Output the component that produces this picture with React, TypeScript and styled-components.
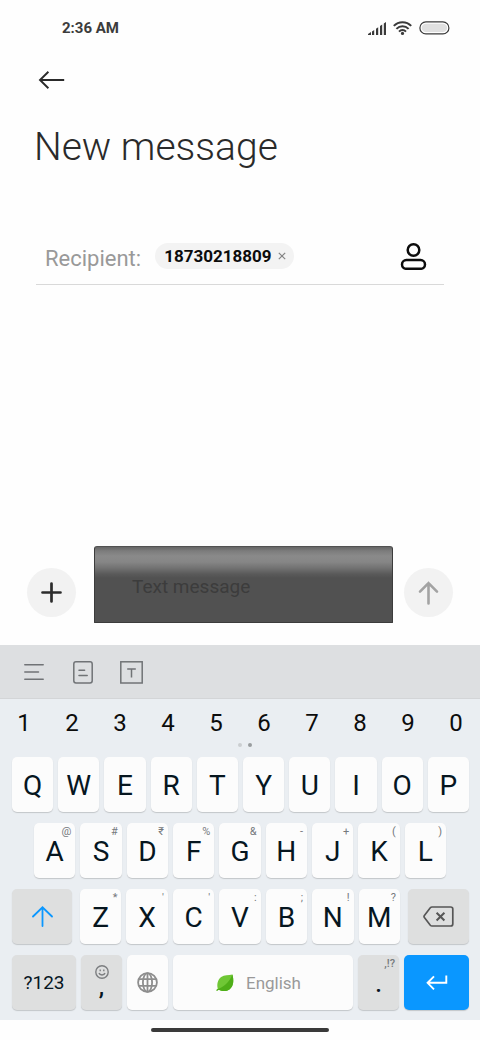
import React, { useState } from "react";
import styled, { createGlobalStyle } from "styled-components";

const GlobalStyle = createGlobalStyle`
  *, *::before, *::after { box-sizing: border-box; }
  body { margin: 0; background: #fefefe; font-family: Roboto, "Liberation Sans", sans-serif; }
  button, input { font-family: inherit; }
  button { padding: 0; border: 0; background: none; cursor: pointer; }
  svg { display: block; }
`;

const Screen = styled.div`
  display: flex;
  flex-direction: column;
  min-height: 100vh;
  background: #fefefe;
`;

const StatusBar = styled.div`
  display: flex;
  align-items: center;
  justify-content: space-between;
  height: 56px;
  padding: 0 30px 0 62px;
  color: #3c3c3c;
  font-size: 15px;
  font-weight: 700;
`;

const StatusIcons = styled.div`
  display: flex;
  align-items: center;
  gap: 7px;
`;

const Header = styled.header`
  padding: 8px 34px 0;
`;

const BackButton = styled.button`
  display: flex;
  align-items: center;
  height: 32px;
  padding: 0 4px;
`;

const Title = styled.h1`
  margin: 28px 0 0;
  color: #2a2a2a;
  font-size: 39px;
  font-weight: 300;
  line-height: 46px;
`;

const RecipientRow = styled.div`
  display: flex;
  align-items: center;
  height: 58px;
  margin: 57px 36px 0;
  padding: 0 17px 0 9px;
  border-bottom: 1px solid #d9d9d9;
`;

const RecipientLabel = styled.label`
  color: #999;
  font-size: 22px;
  line-height: 26px;
  padding-top: 6px;
`;

const Chip = styled.span`
  display: flex;
  align-items: center;
  gap: 7px;
  height: 26px;
  margin-left: 14px;
  padding: 0 8px 0 9px;
  border-radius: 13px;
  background: #f3f3f3;
  color: #0c0c0c;
  font-size: 17px;
  font-weight: 700;
`;

const RecipientInput = styled.input`
  flex: 1;
  min-width: 0;
  border: 0;
  outline: 0;
  background: transparent;
  font-size: 17px;
`;

const Conversation = styled.main`
  flex: 1;
`;

const Composer = styled.form`
  display: flex;
  align-items: flex-end;
  padding: 0 27px 22px;
`;

const RoundButton = styled.button`
  display: grid;
  place-items: center;
  flex: none;
  width: 49px;
  height: 49px;
  margin-bottom: 6px;
  border-radius: 50%;
  background: #f2f2f2;
`;

const MessageInput = styled.input`
  flex: 1;
  min-width: 0;
  height: 77px;
  margin: 0 11px 0 18px;
  padding: 4px 37px 0;
  border: 1px solid #3c3c3c;
  border-top-color: #525252;
  border-radius: 3px 3px 1px 1px;
  outline: 0;
  background: linear-gradient(#666 0, #7c7c7c 4px, #8a8a8a 9px, #868686 15px, #727272 21px, #5a5a5a 27px, #515151 31px);
  color: #3a3a3a;
  font-size: 19px;
  &::placeholder { color: #3c3c3c; opacity: 1; }
`;

const Keyboard = styled.section`
  background: #eaeef2;
  padding-bottom: 10px;
`;

const Toolbar = styled.div`
  display: flex;
  align-items: center;
  gap: 24px;
  height: 54px;
  padding: 1px 21px 0;
  border-bottom: 1px solid #d3d5d7;
  background: #dddfe1;
`;

const ToolButton = styled.button`
  display: grid;
  place-items: center;
  width: 25px;
  height: 25px;
`;

const DigitRow = styled.div`
  display: grid;
  grid-template-columns: repeat(10, 1fr);
  padding-top: 3px;
`;

const Digit = styled.button`
  height: 41px;
  color: #0c0c0c;
  font-size: 24px;
`;

const PageDots = styled.div`
  display: flex;
  justify-content: center;
  gap: 6px;
  height: 14px;
  padding-left: 10px;
`;

const Dot = styled.span<{ $active?: boolean }>`
  width: 4px;
  height: 4px;
  border-radius: 50%;
  background: ${(p) => (p.$active ? "#999c9f" : "#cbced1")};
`;

const KeyRows = styled.div`
  display: flex;
  flex-direction: column;
  gap: 11px;
`;

const KeyRow = styled.div<{ $columns: string; $padding?: string; $gap?: number }>`
  display: grid;
  grid-template-columns: ${(p) => p.$columns};
  gap: ${(p) => p.$gap ?? 5}px;
  padding: ${(p) => p.$padding ?? "0 11px 0 12px"};
`;

const keyColors = { light: "#fcfcfc", dark: "#dedfdf", accent: "#0a97ff" };

const Key = styled.button<{ $tone?: keyof typeof keyColors; $size?: number }>`
  position: relative;
  display: flex;
  align-items: center;
  justify-content: center;
  height: 55px;
  min-width: 0;
  border-radius: 5px;
  background: ${(p) => keyColors[p.$tone ?? "light"]};
  box-shadow: 0 1px 1px #c3c6c9;
  color: #06161f;
  font-size: ${(p) => p.$size ?? 28}px;
  line-height: 24px;
`;

const LetterKey = styled(Key)`
  padding-top: 2px;
`;

const Hint = styled.span`
  position: absolute;
  top: 3px;
  right: 4px;
  color: #75797c;
  font-size: 11px;
  line-height: 12px;
`;

const SpaceKey = styled(Key)`
  gap: 12px;
  padding-right: 9px;
  color: #999;
`;

const CommaKey = styled(Key)`
  flex-direction: column;
  justify-content: flex-start;
  padding-top: 10px;
  font-weight: 500;
  line-height: 16px;
`;

const PeriodKey = styled(Key)`
  padding-top: 2px;
  font-weight: 500;
`;

const HomeArea = styled.footer`
  display: flex;
  justify-content: center;
  height: 20px;
  padding-top: 8px;
`;

const HomeHandle = styled.span`
  width: 37%;
  height: 4px;
  border-radius: 2px;
  background: #3a3a3a;
`;

const SignalIcon = () => (
  <svg width="18" height="13" viewBox="0 0 18 13" fill="#3a3a3a">
    <path d="M0 13V12L3 10V13zM4 9.4L6.2 8V13H4zM8 6.8L10.2 5.2V13H8zM12 4L14.2 2.4V13H12zM15.8 1.4L18 0V13H15.8z" />
  </svg>
);

const WifiIcon = () => (
  <svg width="19" height="14" viewBox="0 0 19 14" fill="none" stroke="#3a3a3a" strokeWidth="2">
    <path d="M.8 4.9C5.6 0 13.4 0 18.2 4.9M3.4 7.9C6.9 4.4 12.1 4.4 15.6 7.9M6 10.6C8 8.6 11 8.6 13 10.6" />
    <circle cx="9.5" cy="12.4" r="1.6" fill="#3a3a3a" stroke="none" />
  </svg>
);

const BatteryIcon = () => (
  <svg width="31" height="14" viewBox="0 0 31 14">
    <rect x=".9" y=".9" width="29" height="12" rx="6" fill="#fefefe" stroke="#3a3a3a" strokeWidth="1.2" />
    <rect x="2.7" y="2.7" width="25.4" height="8.4" rx="4.2" fill="#e0e0e0" />
  </svg>
);

const BackIcon = () => (
  <svg width="27" height="18" viewBox="0 0 27 18" fill="none" stroke="#2a2a2a" strokeWidth="1.9">
    <path d="M26.2 9H2M10.4 .8L2 9L10.4 17.2" />
  </svg>
);

const RemoveIcon = () => (
  <svg width="8" height="8" viewBox="0 0 8 8" stroke="#858585" strokeWidth="1.2">
    <path d="M.8 .8L7.2 7.2M7.2 .8L.8 7.2" />
  </svg>
);

const ContactIcon = () => (
  <svg width="27" height="28" viewBox="0 0 27 28" fill="none" stroke="#0c0c0c" strokeWidth="2.5">
    <circle cx="13.5" cy="8" r="5.8" />
    <rect x="2" y="18" width="23" height="8.8" rx="4.4" />
  </svg>
);

const PlusIcon = () => (
  <svg width="21" height="21" viewBox="0 0 21 21" stroke="#2c2c2c" strokeWidth="2.7" strokeLinecap="round">
    <path d="M10.5 1.5V19.5M1.5 10.5H19.5" />
  </svg>
);

const SendIcon = () => (
  <svg width="21" height="24" viewBox="0 0 21 24" fill="none" stroke="#a3a3a3" strokeWidth="2.6" strokeLinecap="round">
    <path d="M10.5 22.5V2M2 10.6L10.5 2L19 10.6" />
  </svg>
);

const MenuIcon = () => (
  <svg width="20" height="18" viewBox="0 0 20 18" stroke="#707376" strokeWidth="1.5" strokeLinecap="round">
    <path d="M.8 1.8H19.2M.8 9H14.5M.8 16.2H19.2" />
  </svg>
);

const ClipboardIcon = () => (
  <svg width="20" height="23" viewBox="0 0 20 23" fill="none" stroke="#707376" strokeWidth="1.5" strokeLinecap="round">
    <rect x=".8" y=".8" width="18.4" height="21.2" rx="2.2" />
    <path d="M6 9.2H11.6M6 14.4H14.2" />
  </svg>
);

const TextIcon = () => (
  <svg width="23" height="23" viewBox="0 0 23 23" fill="none" stroke="#707376" strokeWidth="1.5">
    <rect x=".8" y=".8" width="21.4" height="21.2" />
    <path d="M7.2 8H15.8M11.5 8V16.4" />
  </svg>
);

const ShiftIcon = () => (
  <svg width="21" height="21" viewBox="0 0 21 21" fill="none" stroke="#0a97ff" strokeWidth="1.8" strokeLinecap="round">
    <path d="M10.5 20V1.3M1 10.5L10.5 1.3L20 10.5" />
  </svg>
);

const BackspaceIcon = () => (
  <svg width="31" height="21" viewBox="0 0 31 21" fill="none" stroke="#565656" strokeWidth="1.7">
    <path d="M9 1H27.6Q29.8 1 29.8 3V18Q29.8 20 27.6 20H9Q8 20 7.3 19.2L1.4 11.6Q.6 10.5 1.4 9.4L7.3 1.8Q8 1 9 1Z" />
    <path d="M13.6 6.7L21.4 14.5M21.4 6.7L13.6 14.5" strokeWidth="2" />
  </svg>
);

const SmileIcon = () => (
  <svg width="14" height="14" viewBox="0 0 14 14" fill="none" stroke="#7c7e80" strokeWidth="1.4">
    <circle cx="7" cy="7" r="6.2" />
    <path d="M5.2 4.4V6.2M8.8 4.4V6.2M4 8C4.8 10.6 9.2 10.6 10 8" />
  </svg>
);

const GlobeIcon = () => (
  <svg width="21" height="21" viewBox="0 0 21 21" fill="none" stroke="#8e8e8e" strokeWidth="1.8">
    <circle cx="10.5" cy="10.5" r="9.4" />
    <ellipse cx="10.5" cy="10.5" rx="4.6" ry="9.4" />
    <path d="M1.8 7.2H19.2M1.8 13.8H19.2M10.5 1V20" />
  </svg>
);

const LeafIcon = () => (
  <svg width="18" height="18" viewBox="0 0 18 18">
    <path d="M16.4 .6C18 6.5 17.6 12.2 13.8 15.2C10.6 17.7 6 17.6 2.8 15.7L.5 17L.8 15.6L1.8 14.6C.6 10.3 1.7 5.6 5.2 3C8.3 .9 12.6 1.4 16.4 .6Z" fill="#6fc735" />
    <path d="M16.4 .6C18 6.5 17.6 12.2 13.8 15.2C10.6 17.7 6 17.6 2.8 15.7L.5 17L.8 15.6C7.7 13 13.5 8.4 16.4 .6Z" fill="#4eae18" />
  </svg>
);

const EnterIcon = () => (
  <svg width="22" height="15" viewBox="0 0 22 15" fill="none" stroke="#fff" strokeWidth="1.9">
    <path d="M20.3 .5V7.8H1.6M8 1.3L1.6 7.8L8 14.3" />
  </svg>
);

const digits = "1234567890".split("");
const topRow = "QWERTYUIOP".split("");
const homeRow = [["A", "@"], ["S", "#"], ["D", "₹"], ["F", "%"], ["G", "&"], ["H", "-"], ["J", "+"], ["K", "("], ["L", ")"]];
const bottomRow = [["Z", "*"], ["X", "'"], ["C", "'"], ["V", ":"], ["B", ";"], ["N", "!"], ["M", "?"]];

export default function App() {
  const [text, setText] = useState("");
  const type = (c: string) => setText((t) => t + c);

  const letterKey = ([letter, hint]: string[]) => (
    <LetterKey key={letter} type="button" onClick={() => type(letter)}>
      {letter}
      {hint && <Hint aria-hidden>{hint}</Hint>}
    </LetterKey>
  );

  return (
    <Screen>
      <GlobalStyle />
      <StatusBar>
        <time>2:36 AM</time>
        <StatusIcons>
          <SignalIcon />
          <WifiIcon />
          <BatteryIcon />
        </StatusIcons>
      </StatusBar>

      <Header>
        <BackButton aria-label="Back"><BackIcon /></BackButton>
        <Title>New message</Title>
      </Header>

      <RecipientRow>
        <RecipientLabel htmlFor="recipient">Recipient:</RecipientLabel>
        <Chip>
          18730218809
          <button type="button" aria-label="Remove recipient"><RemoveIcon /></button>
        </Chip>
        <RecipientInput id="recipient" />
        <button type="button" aria-label="Contacts"><ContactIcon /></button>
      </RecipientRow>

      <Conversation />

      <Composer onSubmit={(e) => e.preventDefault()}>
        <RoundButton type="button" aria-label="Add attachment"><PlusIcon /></RoundButton>
        <MessageInput
          aria-label="Text message"
          placeholder="Text message"
          value={text}
          onChange={(e) => setText(e.target.value)}
        />
        <RoundButton type="submit" aria-label="Send"><SendIcon /></RoundButton>
      </Composer>

      <Keyboard aria-label="Keyboard">
        <Toolbar>
          <ToolButton aria-label="Menu"><MenuIcon /></ToolButton>
          <ToolButton aria-label="Clipboard"><ClipboardIcon /></ToolButton>
          <ToolButton aria-label="Text editing"><TextIcon /></ToolButton>
        </Toolbar>
        <DigitRow>
          {digits.map((d) => (
            <Digit key={d} type="button" onClick={() => type(d)}>{d}</Digit>
          ))}
        </DigitRow>
        <PageDots>
          <Dot />
          <Dot $active />
        </PageDots>
        <KeyRows>
          <KeyRow $columns="repeat(10, 1fr)">{topRow.map((l) => letterKey([l]))}</KeyRow>
          <KeyRow $columns="repeat(9, 1fr)" $padding="0 34px">{homeRow.map(letterKey)}</KeyRow>
          <KeyRow $columns="60fr 320fr 61fr" $gap={8}>
            <Key type="button" $tone="dark" aria-label="Shift"><ShiftIcon /></Key>
            <KeyRow $columns="repeat(7, 1fr)" $padding="0">{bottomRow.map(letterKey)}</KeyRow>
            <Key type="button" $tone="dark" aria-label="Backspace" onClick={() => setText((t) => t.slice(0, -1))}>
              <BackspaceIcon />
            </Key>
          </KeyRow>
          <KeyRow $columns="64fr 41fr 41fr 180fr 41fr 65fr">
            <Key type="button" $tone="dark" $size={19}>?123</Key>
            <CommaKey type="button" $tone="dark" $size={24} onClick={() => type(",")}>
              <SmileIcon />
              ,
            </CommaKey>
            <Key type="button" aria-label="Change language"><GlobeIcon /></Key>
            <SpaceKey type="button" $size={17} onClick={() => type(" ")}>
              <LeafIcon />
              English
            </SpaceKey>
            <PeriodKey type="button" $tone="dark" $size={24} onClick={() => type(".")}>
              .
              <Hint aria-hidden>,!?</Hint>
            </PeriodKey>
            <Key type="button" $tone="accent" aria-label="Enter"><EnterIcon /></Key>
          </KeyRow>
        </KeyRows>
      </Keyboard>

      <HomeArea><HomeHandle /></HomeArea>
    </Screen>
  );
}
